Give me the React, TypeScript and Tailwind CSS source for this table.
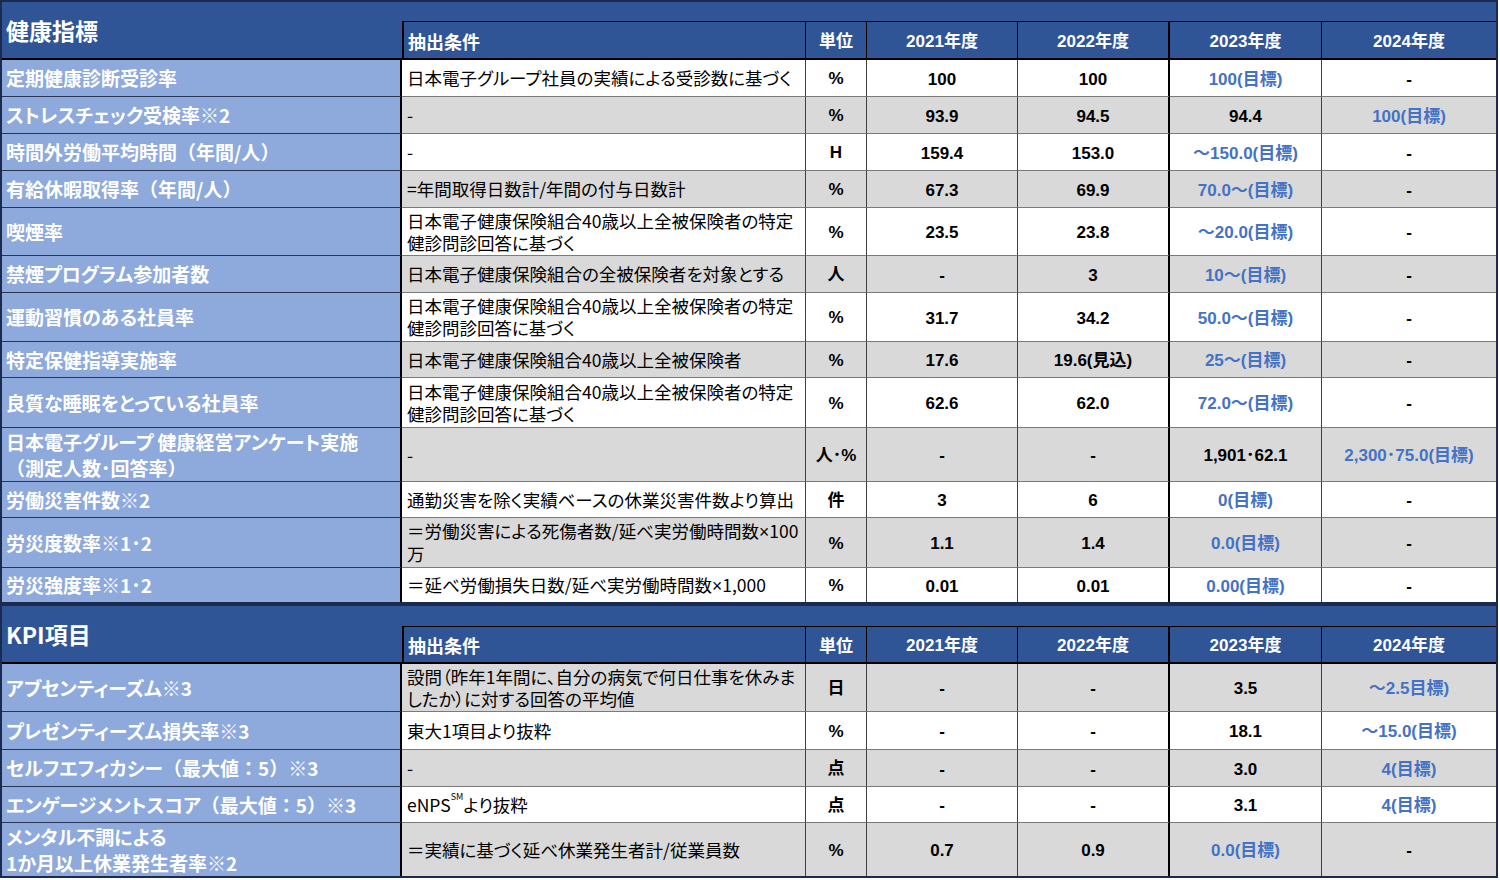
import React from "react";

type Row = {
  label: React.ReactNode;
  cond: React.ReactNode;
  unit: string;
  v: [string, string, string, string];
  h: string;
  gray: boolean;
};

const JP = "font-['Noto_Sans_CJK_JP','Noto_Sans',sans-serif] [font-feature-settings:'palt']";
const NUM = "font-['Liberation_Sans','Noto_Sans_CJK_JP',sans-serif]";

// Label text: proportional kana, but full-width brackets/colon/※ as in the source sheet
function L({ t }: { t: string }) {
  const parts = t.split(/([（）：※])/);
  return (
    <>
      {parts.map((p, i) =>
        /^[（）：※]$/.test(p) ? (
          <span key={i} className="[font-feature-settings:normal]">
            {p}
          </span>
        ) : (
          <React.Fragment key={i}>{p}</React.Fragment>
        )
      )}
    </>
  );
}

const X = () => <span className="font-['Liberation_Sans',sans-serif]">×</span>;

const twoLine = (
  <>
    日本電子健康保険組合40歳以上全被保険者の特定
    <br />
    健診問診回答に基づく
  </>
);

const sec1: Row[] = [
  { label: <L t="定期健康診断受診率" />, cond: "日本電子グループ社員の実績による受診数に基づく", unit: "%", v: ["100", "100", "100(目標)", "-"], h: "h-[37px]", gray: false },
  { label: <L t="ストレスチェック受検率※2" />, cond: "-", unit: "%", v: ["93.9", "94.5", "94.4", "100(目標)"], h: "h-[37px]", gray: true },
  { label: <L t="時間外労働平均時間（年間/人）" />, cond: "-", unit: "H", v: ["159.4", "153.0", "～150.0(目標)", "-"], h: "h-[37px]", gray: false },
  { label: <L t="有給休暇取得率（年間/人）" />, cond: "=年間取得日数計/年間の付与日数計", unit: "%", v: ["67.3", "69.9", "70.0～(目標)", "-"], h: "h-[37px]", gray: true },
  { label: <L t="喫煙率" />, cond: twoLine, unit: "%", v: ["23.5", "23.8", "～20.0(目標)", "-"], h: "h-[48px]", gray: false },
  { label: <L t="禁煙プログラム参加者数" />, cond: "日本電子健康保険組合の全被保険者を対象とする", unit: "人", v: ["-", "3", "10～(目標)", "-"], h: "h-[37px]", gray: true },
  { label: <L t="運動習慣のある社員率" />, cond: twoLine, unit: "%", v: ["31.7", "34.2", "50.0～(目標)", "-"], h: "h-[49px]", gray: false },
  { label: <L t="特定保健指導実施率" />, cond: "日本電子健康保険組合40歳以上全被保険者", unit: "%", v: ["17.6", "19.6(見込)", "25～(目標)", "-"], h: "h-[36px]", gray: true },
  { label: <L t="良質な睡眠をとっている社員率" />, cond: twoLine, unit: "%", v: ["62.6", "62.0", "72.0～(目標)", "-"], h: "h-[50px]", gray: false },
  {
    label: (
      <>
        <L t="日本電子グループ 健康経営アンケート実施" />
        <br />
        <L t="（測定人数･回答率）" />
      </>
    ),
    cond: "-",
    unit: "人･%",
    v: ["-", "-", "1,901･62.1", "2,300･75.0(目標)"],
    h: "h-[54px]",
    gray: true,
  },
  { label: <L t="労働災害件数※2" />, cond: "通勤災害を除く実績ベースの休業災害件数より算出", unit: "件", v: ["3", "6", "0(目標)", "-"], h: "h-[36px]", gray: false },
  {
    label: <L t="労災度数率※1･2" />,
    cond: (
      <>
        ＝労働災害による死傷者数/延べ実労働時間数<X />100
        <br />万
      </>
    ),
    unit: "%",
    v: ["1.1", "1.4", "0.0(目標)", "-"],
    h: "h-[50px]",
    gray: true,
  },
  {
    label: <L t="労災強度率※1･2" />,
    cond: (
      <>
        ＝延べ労働損失日数/延べ実労働時間数<X />1,000
      </>
    ),
    unit: "%",
    v: ["0.01", "0.01", "0.00(目標)", "-"],
    h: "h-[34px]",
    gray: false,
  },
];

const sec2: Row[] = [
  {
    label: <L t="アブセンティーズム※3" />,
    cond: (
      <>
        設問（昨年1年間に、自分の病気で何日仕事を休みま
        <br />
        したか）に対する回答の平均値
      </>
    ),
    unit: "日",
    v: ["-", "-", "3.5", "～2.5目標)"],
    h: "h-[48px]",
    gray: true,
  },
  { label: <L t="プレゼンティーズム損失率※3" />, cond: "東大1項目より抜粋", unit: "%", v: ["-", "-", "18.1", "～15.0(目標)"], h: "h-[38px]", gray: false },
  { label: <L t="セルフエフィカシー（最大値：5）※3" />, cond: "-", unit: "点", v: ["-", "-", "3.0", "4(目標)"], h: "h-[37px]", gray: true },
  {
    label: <L t="エンゲージメントスコア（最大値：5）※3" />,
    cond: (
      <>
        eNPS<sup className="text-[9px] align-super">SM</sup>より抜粋
      </>
    ),
    unit: "点",
    v: ["-", "-", "3.1", "4(目標)"],
    h: "h-[36px]",
    gray: false,
  },
  {
    label: (
      <>
        <L t="メンタル不調による" />
        <br />
        <L t="1か月以上休業発生者率※2" />
      </>
    ),
    cond: "＝実績に基づく延べ休業発生者計/従業員数",
    unit: "%",
    v: ["0.7", "0.9", "0.0(目標)", "-"],
    h: "h-[53px]",
    gray: true,
  },
];

const COLS = "grid grid-cols-[400px_404px_61px_151px_152px_152px_174px]";

function Section({ title, rows, bandH, headH }: { title: string; rows: Row[]; bandH: string; headH: string }) {
  return (
    <div className="w-[1498px] border-2 border-[#1b2b4f] bg-[#2f5597]">
      <div className={COLS}>
        <div className={`row-span-2 flex items-center pl-[4px] border-b-2 border-black text-white font-bold text-[23px] ${JP}`}>
          {title}
        </div>
        <div className={`col-span-6 ${bandH} border-b border-black`} />
        <div className={`${headH} flex items-center pl-[4px] pt-[2px] border-l-2 border-r border-b-2 border-black text-white font-bold text-[18px] ${JP}`}>
          抽出条件
        </div>
        <div className={`flex items-center justify-center border-r border-b-2 border-black text-white font-bold text-[17px] ${JP}`}>単位</div>
        {["2021年度", "2022年度", "2023年度", "2024年度"].map((y, i) => (
          <div
            key={y}
            className={`flex items-center justify-center pt-[3px] border-b-2 border-black text-white font-bold text-[17px] ${NUM} ${i < 3 ? "border-r" : ""} ${i === 1 ? "border-r-2" : ""}`}
          >
            {y}
          </div>
        ))}
      </div>
      {rows.map((r, idx) => {
        const last = idx === rows.length - 1;
        const bg = r.gray ? "bg-[#d9d9d9]" : "bg-white";
        const bb = last ? "" : "border-b border-[#7a7a7a]";
        return (
          <div key={idx} className={`${COLS} ${r.h}`}>
            <div className={`flex items-center pl-[4px] bg-[#8ea9db] border-r-2 border-r-black ${last ? "" : "border-b border-b-[#2a3553]"} text-white font-bold text-[19px] leading-[26px] whitespace-nowrap ${JP}`}>
              <div>{r.label}</div>
            </div>
            <div className={`flex items-center pl-[5px] ${bg} ${bb} border-r border-r-[#404040] text-black text-[17.5px] leading-[22px] whitespace-nowrap ${JP}`}>
              <div>{r.cond}</div>
            </div>
            <div className={`flex items-center justify-center pt-[2px] ${bg} ${bb} border-r border-r-[#404040] text-black font-bold text-[17px] ${NUM}`}>
              {r.unit}
            </div>
            {r.v.map((val, i) => (
              <div
                key={i}
                className={`flex items-center justify-center pt-[3px] ${bg} ${bb} ${i === 1 ? "border-r-2 border-r-black" : i < 3 ? "border-r border-r-[#404040]" : ""} font-bold text-[17px] whitespace-nowrap ${NUM} ${val.includes("目標") ? "text-[#4472c4]" : "text-black"}`}
              >
                {val}
              </div>
            ))}
          </div>
        );
      })}
    </div>
  );
}

export default function App() {
  return (
    <div className="w-[1500px] h-[880px] bg-white overflow-hidden">
      <Section title="健康指標" rows={sec1} bandH="h-[20px]" headH="h-[38px]" />
      <Section title="KPI項目" rows={sec2} bandH="h-[21px]" headH="h-[37px]" />
    </div>
  );
}
